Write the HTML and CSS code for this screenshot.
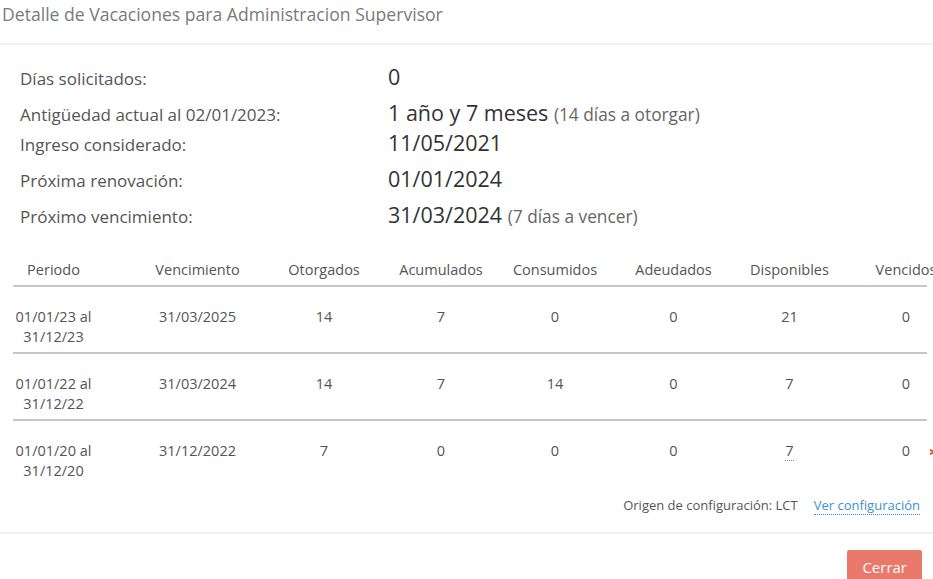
FILE: index.html
```html
<!DOCTYPE html>
<html lang="es">
<head>
<meta charset="utf-8">
<title>Detalle de Vacaciones</title>
<link rel="stylesheet" href="styles.css">
</head>
<body>
<div class="modal">
  <header class="modal-header">
    <h1 class="modal-title">Detalle de Vacaciones para Administracion Supervisor</h1>
  </header>
  <main class="modal-body">
    <div class="summary">
      <div class="summary-row">
        <span class="summary-label">Días solicitados:</span>
        <span class="summary-value">0</span>
      </div>
      <div class="summary-row summary-row--tight">
        <span class="summary-label">Antigüedad actual al 02/01/2023:</span>
        <span class="summary-value">1 año y 7 meses <span class="summary-note">(14 días a otorgar)</span></span>
      </div>
      <div class="summary-row">
        <span class="summary-label">Ingreso considerado:</span>
        <span class="summary-value">11/05/2021</span>
      </div>
      <div class="summary-row">
        <span class="summary-label">Próxima renovación:</span>
        <span class="summary-value">01/01/2024</span>
      </div>
      <div class="summary-row">
        <span class="summary-label">Próximo vencimiento:</span>
        <span class="summary-value">31/03/2024 <span class="summary-note">(7 días a vencer)</span></span>
      </div>
    </div>

    <div class="vac-table">
      <div class="vac-row vac-head">
        <div class="cell c1">Periodo</div>
        <div class="cell c2">Vencimiento</div>
        <div class="cell c3">Otorgados</div>
        <div class="cell c4">Acumulados</div>
        <div class="cell c5">Consumidos</div>
        <div class="cell c6">Adeudados</div>
        <div class="cell c7">Disponibles</div>
        <div class="cell c8">Vencidos</div>
      </div>
      <div class="vac-row">
        <div class="cell c1">01/01/23 al 31/12/23</div>
        <div class="cell c2">31/03/2025</div>
        <div class="cell c3">14</div>
        <div class="cell c4">7</div>
        <div class="cell c5">0</div>
        <div class="cell c6">0</div>
        <div class="cell c7">21</div>
        <div class="cell c8">0</div>
      </div>
      <div class="vac-row">
        <div class="cell c1">01/01/22 al 31/12/22</div>
        <div class="cell c2">31/03/2024</div>
        <div class="cell c3">14</div>
        <div class="cell c4">7</div>
        <div class="cell c5">14</div>
        <div class="cell c6">0</div>
        <div class="cell c7">7</div>
        <div class="cell c8">0</div>
      </div>
      <div class="vac-row vac-row--last">
        <div class="cell c1">01/01/20 al 31/12/20</div>
        <div class="cell c2">31/12/2022</div>
        <div class="cell c3">7</div>
        <div class="cell c4">0</div>
        <div class="cell c5">0</div>
        <div class="cell c6">0</div>
        <div class="cell c7"><span class="hint">7</span></div>
        <div class="cell c8">0<svg class="warn-icon" width="10" height="10" viewBox="0 0 10 10"><path d="M5 0.5v9M1 2.8l8 4.4M9 2.8l-8 4.4" stroke="#e8503a" stroke-width="2" fill="none"/></svg></div>
      </div>
    </div>

    <div class="config">
      <span class="config-origin">Origen de configuración: LCT</span>
      <a class="config-link" href="#">Ver configuración</a>
    </div>
  </main>
  <footer class="modal-footer">
    <button class="btn-close" type="button">Cerrar</button>
  </footer>
</div>
</body>
</html>
```

FILE: styles.css
```css
html, body {
  margin: 0;
  padding: 0;
  background: #ffffff;
  overflow: hidden;
}

body {
  font-family: "Open Sans", "Noto Sans", sans-serif;
  color: #555555;
}

.modal {
  width: 933px;
  overflow: hidden;
}

.modal-header {
  border-bottom: 2px solid #f2f2f2;
  padding: 2px 0 17px 2px;
}

.modal-title {
  margin: 0;
  font-size: 17.6px;
  line-height: 24px;
  font-weight: 400;
  color: #7a7a7a;
}

.modal-body {
  padding: 18px 0 17px 0;
}

/* summary */
.summary {
  padding-left: 20px;
}

.summary-row {
  display: flex;
  align-items: baseline;
  height: 30px;
  margin-bottom: 6px;
}

.summary-row--tight {
  margin-bottom: 0;
}

.summary-row:last-child {
  margin-bottom: 0;
}

.summary-label {
  flex: none;
  width: 368px;
  font-size: 17px;
  line-height: 28px;
  color: #555555;
}

.summary-value {
  font-size: 21.5px;
  line-height: 28px;
  font-weight: 500;
  color: #333333;
  white-space: nowrap;
}

.summary-note {
  font-size: 17.3px;
  font-weight: 400;
  color: #666666;
}

/* table */
.vac-table {
  margin: 21px 0 0 13px;
  width: 914px;
}

.vac-row {
  display: grid;
  grid-template-columns: 113px 135px 121px 115px 116px 118px 117px 116px;
  width: 914px;
  border-bottom: 2px solid #c6c6c6;
  font-size: 14.5px;
  line-height: 20px;
  color: #555555;
}

.vac-row--last {
  border-bottom: none;
}

.vac-row .cell {
  padding: 20px 0 5px 0;
  text-align: center;
}

.vac-head .cell {
  padding: 8px 0 5px 0;
  white-space: nowrap;
}

.vac-row .c1 { padding-right: 32px; }
.vac-row .c2 { padding-left: 8px; }
.vac-row .c3 { padding-left: 5px; }
.vac-row .c4 { padding-left: 3px; }
.vac-row .c6 { padding-left: 3px; }

.c8 {
  position: relative;
}

.hint {
  border-bottom: 1px dotted #8a8a8a;
}

.warn-icon {
  position: absolute;
  left: 81px;
  top: 26px;
}

/* config */
.config {
  display: flex;
  justify-content: flex-end;
  align-items: baseline;
  gap: 16px;
  margin-top: 10px;
  padding-right: 13px;
  font-size: 13px;
  line-height: 18px;
}

.config-origin {
  color: #555555;
}

.config-link {
  color: #3d8fd6;
  text-decoration: none;
  border-bottom: 1px dotted #3d8fd6;
}

/* footer */
.modal-footer {
  display: flex;
  justify-content: flex-end;
  border-top: 2px solid #f0f0f0;
  padding: 16px 11px 0 0;
}

.btn-close {
  font-family: "Open Sans", "Noto Sans", sans-serif;
  font-size: 15px;
  line-height: 20px;
  padding: 7px 15px;
  border: none;
  border-radius: 2px;
  background: #e9796b;
  color: #ffffff;
}
```
